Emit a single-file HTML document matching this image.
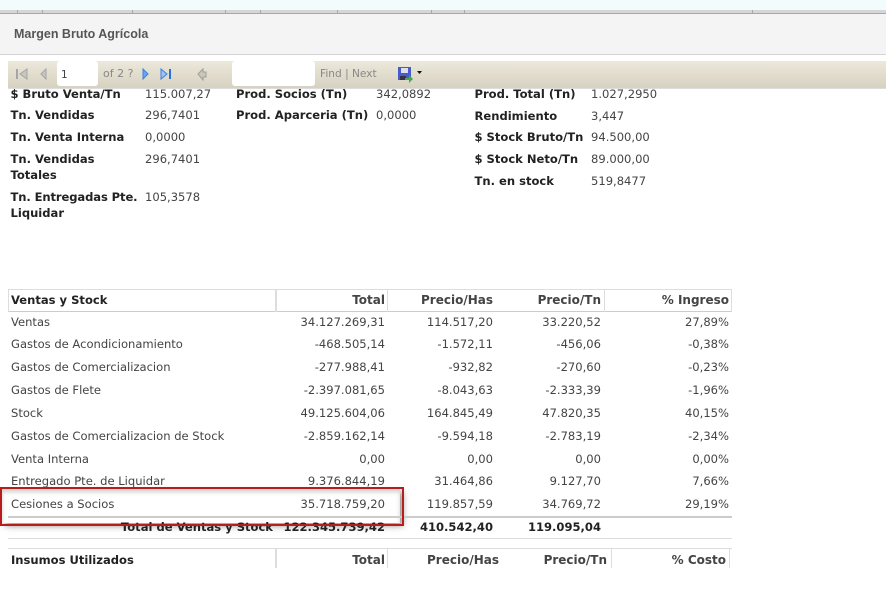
<!DOCTYPE html>
<html><head><meta charset="utf-8"><style>
html,body{margin:0;padding:0;background:#fff}
#p{position:relative;width:886px;height:599px;overflow:hidden;background:#fff;font-family:"DejaVu Sans",sans-serif;font-size:11.55px;color:#444;filter:blur(.3px)}
#p div{position:absolute}
.t{white-space:nowrap;line-height:14px;height:14px}
.b{font-weight:bold;color:#222}
.r{text-align:right;width:200px}
.h{font-size:12px;color:#444}
.l{background:#ddd}
.k{top:10px;width:1px;height:3px;background:#a8a8a8}
</style></head><body><div id="p">
<div style="left:0;top:0;width:886px;height:10px;background:#f2fcfc"></div>
<div style="left:0;top:10px;width:886px;height:3px;background:#d6d6d6"></div>
<div style="left:0;top:13px;width:886px;height:1px;background:#a8a8a8"></div>
<div class="k" style="left:17px"></div><div class="k" style="left:42px"></div><div class="k" style="left:132px"></div><div class="k" style="left:225px"></div><div class="k" style="left:260px"></div><div class="k" style="left:337px"></div><div class="k" style="left:431px"></div><div class="k" style="left:464px"></div><div class="k" style="left:752px"></div>
<div style="left:0;top:14px;width:886px;height:40px;background:#f4f4f4"></div>
<div style="left:0;top:54px;width:886px;height:1px;background:#d4d4d4"></div>
<div class="t" style="left:14px;top:27px;font:bold 12.5px/14px 'Liberation Sans',sans-serif;color:#555">Margen Bruto Agrícola</div>
<div style="left:8px;top:61px;width:878px;height:27px;background:linear-gradient(#ece8db,#d6d1bf);border-bottom:1px solid #ddd"></div>
<div style="left:57px;top:61px;width:41px;height:25px;background:#fff;border-radius:3px"></div>
<div style="left:232px;top:61px;width:83px;height:25px;background:#fff;border-radius:3px"></div>
<div class="t" style="left:61px;top:68px;font-size:10.5px">1</div>
<div class="t" style="left:103px;top:67px;font-size:11px;color:#888">of 2 ?</div>
<div class="t" style="left:320px;top:67px;font-size:10.6px;color:#888">Find | Next</div>
<svg style="position:absolute;left:0;top:55px" width="430" height="35">
<path d="M17 14v10" stroke="#a5a5a5" stroke-width="2"/><path d="M27 14l-7 5 7 5z" stroke="#a5a5a5" fill="#c6c6c0"/>
<path d="M46 14l-5 5 5 5z" stroke="#a5a5a5" fill="#c6c6c0"/>
<path d="M143 14l5 5-5 5z" stroke="#3d7fe0" fill="#6aa5f0"/>
<path d="M161 14l6 5-6 5z" stroke="#3d7fe0" fill="#9cc4f4"/><path d="M170 14v10" stroke="#2d6fd8" stroke-width="2"/>
<path d="M198 19l5-5v3h3v5h-3v3z" stroke="#a0a098" fill="#c8c8bc"/>
<path d="M398 12h13v13h-13z" fill="#4a5ac8"/><path d="M401 13h7v5h-7z" fill="#dde"/><path d="M400 21h6v4h-6z" fill="#334"/>
<path d="M405 23h4v-3l4 4-4 4v-3h-4z" fill="#48a848"/>
<path d="M417 16h5l-2.500 3z" fill="#111"/>
</svg>
<div class="t b" style="left:10.500px;top:87px">$ Bruto Venta/Tn</div><div class="t" style="left:145px;top:87px">115.007,27</div>
<div class="t b" style="left:10.500px;top:108px">Tn. Vendidas</div><div class="t" style="left:145px;top:108px">296,7401</div>
<div class="t b" style="left:10.500px;top:130px">Tn. Venta Interna</div><div class="t" style="left:145px;top:130px">0,0000</div>
<div class="t b" style="left:10.500px;top:152px">Tn. Vendidas</div><div class="t" style="left:145px;top:152px">296,7401</div>
<div class="t b" style="left:10.500px;top:168px">Totales</div>
<div class="t b" style="left:10.500px;top:190px;letter-spacing:-.1px">Tn. Entregadas Pte.</div><div class="t" style="left:145px;top:190px">105,3578</div>
<div class="t b" style="left:10.500px;top:206px">Liquidar</div>
<div class="t b" style="left:236px;top:87px">Prod. Socios (Tn)</div><div class="t" style="left:376px;top:87px">342,0892</div>
<div class="t b" style="left:236px;top:108px">Prod. Aparceria (Tn)</div><div class="t" style="left:376px;top:108px">0,0000</div>
<div class="t b" style="left:474.500px;top:87px">Prod. Total (Tn)</div><div class="t" style="left:591px;top:87px">1.027,2950</div>
<div class="t b" style="left:474.500px;top:109px">Rendimiento</div><div class="t" style="left:591px;top:109px">3,447</div>
<div class="t b" style="left:474.500px;top:130px">$ Stock Bruto/Tn</div><div class="t" style="left:591px;top:130px">94.500,00</div>
<div class="t b" style="left:474.500px;top:152px">$ Stock Neto/Tn</div><div class="t" style="left:591px;top:152px">89.000,00</div>
<div class="t b" style="left:474.500px;top:174px">Tn. en stock</div><div class="t" style="left:591px;top:174px">519,8477</div>

<div class="l" style="left:8px;top:289px;width:724px;height:1px"></div>
<div class="l" style="left:8px;top:311px;width:724px;height:1px;background:#ccc"></div>
<div class="l" style="left:8px;top:289px;width:1px;height:23px"></div>
<div class="l" style="left:275px;top:289px;width:2px;height:23px"></div>
<div class="l" style="left:387px;top:289px;width:1px;height:23px"></div>
<div class="l" style="left:604px;top:289px;width:1px;height:23px"></div>
<div class="l" style="left:731px;top:289px;width:1px;height:23px"></div>
<div class="t b" style="left:11px;top:293px">Ventas y Stock</div>
<div class="t b r h" style="left:185px;top:293px">Total</div>
<div class="t b r h" style="left:293px;top:293px">Precio/Has</div>
<div class="t b r h" style="left:401px;top:293px">Precio/Tn</div>
<div class="t b r h" style="left:529px;top:293px">% Ingreso</div>

<div class="t" style="left:11px;top:315px">Ventas</div><div class="t r" style="left:185px;top:315px">34.127.269,31</div><div class="t r" style="left:293px;top:315px">114.517,20</div><div class="t r" style="left:401px;top:315px">33.220,52</div><div class="t r" style="left:529px;top:315px">27,89%</div>
<div class="t" style="left:11px;top:337px">Gastos de Acondicionamiento</div><div class="t r" style="left:185px;top:337px">-468.505,14</div><div class="t r" style="left:293px;top:337px">-1.572,11</div><div class="t r" style="left:401px;top:337px">-456,06</div><div class="t r" style="left:529px;top:337px">-0,38%</div>
<div class="t" style="left:11px;top:360px">Gastos de Comercializacion</div><div class="t r" style="left:185px;top:360px">-277.988,41</div><div class="t r" style="left:293px;top:360px">-932,82</div><div class="t r" style="left:401px;top:360px">-270,60</div><div class="t r" style="left:529px;top:360px">-0,23%</div>
<div class="t" style="left:11px;top:383px">Gastos de Flete</div><div class="t r" style="left:185px;top:383px">-2.397.081,65</div><div class="t r" style="left:293px;top:383px">-8.043,63</div><div class="t r" style="left:401px;top:383px">-2.333,39</div><div class="t r" style="left:529px;top:383px">-1,96%</div>
<div class="t" style="left:11px;top:406px">Stock</div><div class="t r" style="left:185px;top:406px">49.125.604,06</div><div class="t r" style="left:293px;top:406px">164.845,49</div><div class="t r" style="left:401px;top:406px">47.820,35</div><div class="t r" style="left:529px;top:406px">40,15%</div>
<div class="t" style="left:11px;top:429px">Gastos de Comercializacion de Stock</div><div class="t r" style="left:185px;top:429px">-2.859.162,14</div><div class="t r" style="left:293px;top:429px">-9.594,18</div><div class="t r" style="left:401px;top:429px">-2.783,19</div><div class="t r" style="left:529px;top:429px">-2,34%</div>
<div class="t" style="left:11px;top:452px">Venta Interna</div><div class="t r" style="left:185px;top:452px">0,00</div><div class="t r" style="left:293px;top:452px">0,00</div><div class="t r" style="left:401px;top:452px">0,00</div><div class="t r" style="left:529px;top:452px">0,00%</div>
<div class="t" style="left:11px;top:474px">Entregado Pte. de Liquidar</div><div class="t r" style="left:185px;top:474px">9.376.844,19</div><div class="t r" style="left:293px;top:474px">31.464,86</div><div class="t r" style="left:401px;top:474px">9.127,70</div><div class="t r" style="left:529px;top:474px">7,66%</div>

<div style="left:2px;top:489px;width:398px;height:34px;box-shadow:3px 3px 6px rgba(90,90,80,.65),inset 0 3px 4px rgba(120,120,110,.35);background:#fff"></div>
<div class="t" style="left:11px;top:497px">Cesiones a Socios</div><div class="t r" style="left:185px;top:497px">35.718.759,20</div><div class="t r" style="left:293px;top:497px">119.857,59</div><div class="t r" style="left:401px;top:497px">34.769,72</div><div class="t r" style="left:529px;top:497px">29,19%</div>
<div style="left:8px;top:516px;width:724px;height:2px;background:#ccc"></div>
<div class="t b r" style="left:73px;top:520px">Total de Ventas y Stock</div><div class="t b r" style="left:185px;top:520px">122.345.739,42</div><div class="t b r" style="left:293px;top:520px">410.542,40</div><div class="t b r" style="left:401px;top:520px">119.095,04</div>
<div style="left:0;top:487px;width:400px;height:35px;border:2px solid #b81c1c"></div>
<div class="l" style="left:8px;top:538px;width:724px;height:1px"></div>
<div class="l" style="left:8px;top:548px;width:724px;height:1px"></div>
<div class="l" style="left:275px;top:548px;width:2px;height:20px"></div>
<div class="l" style="left:387px;top:548px;width:1px;height:20px"></div>
<div class="l" style="left:611px;top:548px;width:1px;height:20px"></div>
<div class="l" style="left:729px;top:548px;width:1px;height:20px"></div>
<div class="t b" style="left:11px;top:553px">Insumos Utilizados</div>
<div class="t b r h" style="left:185px;top:553px">Total</div>
<div class="t b r h" style="left:299px;top:553px">Precio/Has</div>
<div class="t b r h" style="left:407px;top:553px">Precio/Tn</div>
<div class="t b r h" style="left:526px;top:553px">% Costo</div>
</div></body></html>
